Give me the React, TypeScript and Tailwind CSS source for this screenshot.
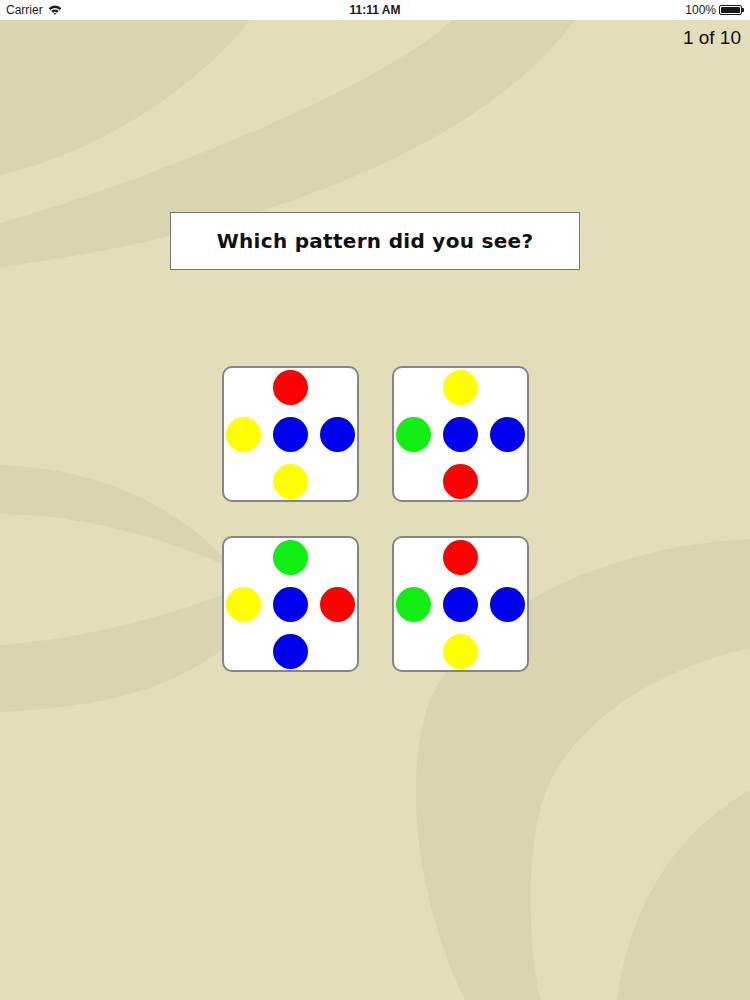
import React from "react";

type Dot = "r" | "b" | "y" | "g";

const dotColor: Record<Dot, string> = {
  r: "bg-[#ff0000]",
  b: "bg-[#0000ee]",
  y: "bg-[#ffff00]",
  g: "bg-[#11ee11]",
};

// top, left, center, right, bottom
const patterns: Dot[][] = [
  ["r", "y", "b", "b", "y"],
  ["y", "g", "b", "b", "r"],
  ["g", "y", "b", "r", "b"],
  ["r", "g", "b", "b", "y"],
];

function Background() {
  return (
    <svg
      className="absolute inset-0 h-full w-full"
      viewBox="0 0 750 1000"
      preserveAspectRatio="none"
    >
      <rect width="750" height="1000" fill="#e2deba" />
      <g fill="#d9d5b1">
        <path d="M0,0 L0,175 C90,155 190,95 250,20 L250,0 Z" />
        <path d="M452,0 L452,20 C380,90 120,190 0,223 L0,267 C250,235 480,150 575,20 L575,0 Z" />
        <path d="M0,465 C90,468 175,500 235,570 C160,535 80,515 0,514 Z" />
        <path d="M0,645 C90,638 170,615 235,590 L235,640 C175,690 100,708 0,712 Z" />
        <path d="M750,539 C610,545 470,610 430,700 C400,780 420,910 465,1000 L750,1000 Z" />
      </g>
      <path
        d="M750,648 C650,670 560,730 540,810 C525,870 530,950 540,1000 L750,1000 Z"
        fill="#e2deba"
      />
      <path d="M750,790 C680,830 630,900 617,1000 L750,1000 Z" fill="#d9d5b1" />
    </svg>
  );
}

function Wifi() {
  return (
    <svg width="14" height="10" viewBox="0 0 14 10" className="ml-[5px]">
      <path d="M7,9.5 L0.6,3.2 A9.2,9.2 0 0 1 13.4,3.2 Z" fill="#1a1a1a" />
      <path d="M7,9.5 L2.4,5 A6.5,6.5 0 0 1 11.6,5 Z" fill="#ffffff" />
      <path d="M7,9.5 L3.4,6 A5.1,5.1 0 0 1 10.6,6 Z" fill="#1a1a1a" />
      <path d="M7,9.5 L5.1,7.6 A2.7,2.7 0 0 1 8.9,7.6 Z" fill="#ffffff" />
      <path d="M7,9.5 L5.9,8.4 A1.55,1.55 0 0 1 8.1,8.4 Z" fill="#1a1a1a" />
    </svg>
  );
}

function StatusBar() {
  return (
    <div className="relative z-10 flex h-[20px] items-center justify-between bg-white px-[6px] text-[12px] text-[#1a1a1a] font-['Liberation_Sans',Arial,sans-serif]">
      <div className="flex w-[120px] items-center">
        <span>Carrier</span>
        <Wifi />
      </div>
      <span className="font-semibold">11:11 AM</span>
      <div className="flex w-[120px] items-center justify-end gap-[3px]">
        <span>100%</span>
        <div className="flex items-center">
          <div className="h-[10px] w-[23px] rounded-[2px] border border-[#1a1a1a] p-[1px]">
            <div className="h-full w-full rounded-[1px] bg-[#1a1a1a]" />
          </div>
          <div className="h-[4px] w-[2px] rounded-r-[1px] bg-[#1a1a1a]" />
        </div>
      </div>
    </div>
  );
}

function PatternCard({ dots }: { dots: Dot[] }) {
  const [top, left, center, right, bottom] = dots;
  const cells: (Dot | null)[] = [null, top, null, left, center, right, null, bottom, null];
  return (
    <button className="flex h-[136px] w-[137px] items-center justify-center rounded-[10px] border-2 border-[#858585] bg-white">
      <div className="grid grid-cols-[35px_35px_35px] grid-rows-[35px_35px_35px] gap-[12px]">
        {cells.map((c, i) =>
          c ? (
            <div key={i} className={`h-[35px] w-[35px] rounded-full ${dotColor[c]}`} />
          ) : (
            <div key={i} />
          )
        )}
      </div>
    </button>
  );
}

export default function App() {
  return (
    <div className="relative h-[1000px] w-[750px] overflow-hidden font-['Liberation_Sans',Arial,sans-serif]">
      <Background />
      <StatusBar />

      <main className="relative flex flex-col items-center">
        <div className="flex w-full justify-end pr-[9px] pt-[6px]">
          <span className="text-[19px] leading-[24px] text-[#111]">1 of 10</span>
        </div>

        <div className="mt-[162px] flex h-[58px] w-[410px] items-center justify-center border border-[#777] bg-white">
          <h1 className="text-[20px] font-bold tracking-[0.3px] text-[#111] font-['DejaVu_Sans',sans-serif]">
            Which pattern did you see?
          </h1>
        </div>

        <div className="mt-[96px] grid grid-cols-[137px_137px] gap-x-[33px] gap-y-[34px]">
          {patterns.map((p, i) => (
            <PatternCard key={i} dots={p} />
          ))}
        </div>
      </main>
    </div>
  );
}
